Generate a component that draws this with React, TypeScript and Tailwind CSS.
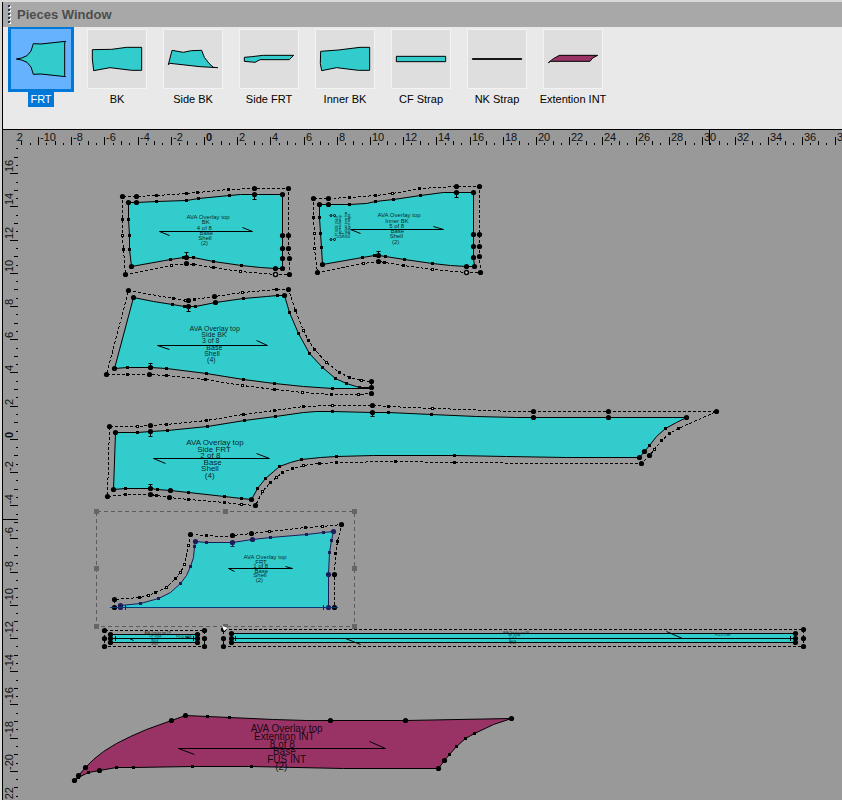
import React, { useState } from 'react';

type TextLine = [text: string, x: number, y: number];

interface Piece {
  name: string;
  origin: [number, number];
  fill: string;
  ink?: string;
  seam: string;
  cut?: string;
  grain?: string;
  notches?: [number, number, number][];
  fontSize: number;
  lines: TextLine[];
}

const TEAL = '#33cccc';
const PLUM = '#993366';

// Piece geometry is stored in thirds of a pixel, relative to the piece origin.
// Points are "x,y,mark" where mark is B (corner), O (open corner), s (curve), o (open curve).
const pieces: Piece[] = [
  {
    name: 'BK',
    origin: [100, 175],
    fill: TEAL,
    seam: '86,82,B 109,82,B 169,79,s 260,76,s 295,71,s 388,61,s 420,58 463,58,B 547,58,B 547,181,B 547,220,B 547,250,B 547,280,B 526,280,B 480,278 424,272,s 340,259,s 280,247,s 260,247,B 250,247,s 211,254,s 95,274,B 88,223,s 88,181,s 85,133,s',
    cut: '67,64,B 109,64,B 169,61,s 260,55,s 292,52,s 385,43,s 463,40,B 565,40,B 565,181,B 565,220,B 568,250,B 568,298,B 526,298,O 421,289,o 340,277,s 280,268,s 260,265,B 214,271,o 76,298,B 70,223,s 67,181,o 67,133,s',
    grain: '207,182 178,169 456,169 427,156',
    notches: [[463, 58, 15], [260, 247, -14]],
    fontSize: 6,
    lines: [['AVA Overlay top', 324, 132], ['BK', 317, 147], ['4 of 8', 313, 165], ['Base', 319, 181], ['Shell', 315, 195], ['(2)', 313, 210]],
  },
  {
    name: 'Inner BK',
    origin: [300, 175],
    fill: TEAL,
    seam: '58,88,B 85,88,B 148,88,s 200,84 226,79,s 280,73,s 361,61,s 430,53 469,52,B 520,52,B 520,178,B 520,214,B 520,247,B 523,274,B 499,274,B 450,272 397,265,s 313,253,s 256,244,s 235,241,B 223,241,s 187,247,s 68,268,B 64,217,s 61,175,s 58,127,s',
    cut: '40,70,B 85,70,B 148,67,s 226,61,s 277,55,o 358,40,s 469,34,B 538,34,B 538,178,B 538,214,B 538,244,B 541,292,B 499,292,O 397,283,o 310,271,s 253,262,s 235,259,B 190,265,o 52,292,B 43,220,o 43,175,o 40,127,s',
    grain: '180,176 152,163 429,163 400,154',
    notches: [[469, 52, 15], [235, 241, -11]],
    fontSize: 6,
    lines: [['AVA Overlay top', 297, 126], ['Inner BK', 291, 144], ['5 of 8', 290, 160], ['Base', 292, 175], ['Shell', 289, 190], ['(2)', 287, 206]],
  },
  {
    name: 'Side BK',
    origin: [90, 280],
    fill: TEAL,
    seam: '130,52,B 190,63 248,73,s 284,79,s 295,79,B 317,79,s 376,68,B 460,55,s 530,48 562,46,s 583,46,B 598,97,s 625,160,s 658,220,s 697,262,s 736,295,s 769,310,s 808,321,s 844,322,B 844,325 727,325,s 640,319 553,310,s 460,298,s 349,280,s 229,265,s 181,262,B 112,262,s 73,265,B',
    cut: '115,31,B 250,55,s 287,61,o 295,61,B 313,58,s 373,49,B 457,37,o 559,28,s 595,28,B 616,91,s 640,151,o 655,181,s 673,208,s 709,247,o 748,277,s 778,292,s 814,301,o 844,304,B 844,340,B 805,343,o 724,343,s 637,337,o 553,328,s 457,316,o 346,298,s 229,286,s 179,283,B 112,283,s 49,283,B',
    grain: '237,209 202,196 533,196 499,181',
    notches: [[295, 79, 16], [181, 262, -12]],
    fontSize: 7,
    lines: [['AVA Overlay top', 374, 153], ['Side BK', 372, 170], ['3 of 8', 362, 189], ['Base', 373, 210], ['Shell', 366, 227], ['(4)', 364, 245]],
  },
  {
    name: 'Side FRT',
    origin: [90, 395],
    fill: TEAL,
    seam: '76,112,B 142,112,s 181,110,B 232,106,s 352,94,s 463,76,s 556,64,s 640,53 680,50 728,49,s 847,52,B 895,52,s 1024,58,s 1160,65 1280,67 1330,67,B 1555,67,B 1789,67,B 1758,81 1726,100,s 1700,125 1678,151,s 1663,169,B 1648,187,B 1430,187 1250,184 1093,181,s 850,181 739,184,s 690,186 634,193,s 600,202 568,214,s 526,250,s 502,280,s 484,313,B 455,310,s 403,304,s 295,292,s 241,286,B 202,283,s 181,280,B 106,280,s 70,283,B',
    cut: '58,94,B 142,94,o 181,91,B 229,88,s 349,76,s 460,58,s 553,46,s 640,34,s 727,31,o 847,31,B 895,34,s 1027,40,o 1130,43 1260,49 1330,49,B 1555,49,B 1879,49,B 1765,100,s 1738,115,s 1714,136,s 1693,163,o 1678,181,B 1654,205,B 1380,205 1093,202,s 917,199,s 739,202,s 688,205,s 640,211,o 607,220,s 577,232,s 559,247,o 541,262,s 517,289,o 496,331,B 454,328,o 403,322,s 295,313,s 238,307,B 199,301,s 181,298,B 106,298,s 52,304,B',
    grain: '225,206 190,190 537,190 499,175',
    notches: [[181, 110, 14], [847, 52, 13], [181, 280, -12]],
    fontSize: 8,
    lines: [['AVA Overlay top', 375, 150], ['Side FRT', 372, 171], ['2 of 8', 361, 189], ['Base', 368, 209], ['Shell', 360, 227], ['(4)', 359, 248]],
  },
  {
    name: 'FRT',
    origin: [90, 505],
    fill: TEAL,
    ink: '#1c1c5a',
    seam: '316,109,B 349,112,s 427,112,B 487,103,B 541,97,s 649,88,s 700,82,s 730,79,B 724,106,s 718,142,s 715,208,B 715,307,B 91,307,B 91,301,B 151,295,s 205,280,s 240,262 271,235,s 290,212 301,184,s 309,156 313,124,s',
    cut: '301,88,B 349,91,s 400,94 427,91,B 484,85,B 538,79,o 646,67,s 697,64,o 754,58,B 742,109,s 736,145,s 733,208,B 733,307,B 73,307,B 73,283,B 148,277,s 175,271,o 196,262,s 229,247,o 256,220,s 271,202,o 283,178,o 295,121,o',
    grain: '434,200 415,190 606,190 586,184',
    notches: [[427, 112, 12]],
    fontSize: 6,
    lines: [['AVA Overlay top', 525, 162], ['FRT', 513, 176], ['1 of 8', 512, 190], ['Base', 514, 204], ['Shell', 510, 216], ['(2)', 508, 230]],
  },
  {
    name: 'CF Strap',
    origin: [90, 505],
    fill: TEAL,
    seam: '61,388,B 322,388,B 322,400,B 322,412,B 61,412,B 61,400,B',
    cut: '43,376,B 343,376,B 343,400,B 343,424,B 43,424,B 43,400,B',
    grain: '131,407 117,400 300,400 286,394',
    fontSize: 3,
    lines: [['AVA Overlay top CF', 203, 387], ['CF Strap', 196, 396], ['6 of 8', 195, 404], ['Base', 195, 412], ['Shell', 194, 420], ['FOLD LINE', 282, 398]],
  },
  {
    name: 'NK Strap',
    origin: [90, 505],
    fill: TEAL,
    seam: '424,385,B 2116,385,B 2116,400,B 2116,412,B 424,412,B 424,400,B',
    cut: '400,373,B 2140,373,B 2140,400,B 2140,424,B 400,424,B 400,400,B',
    grain: '812,418 766,400 1776,400 1728,379',
    fontSize: 3,
    lines: [['AVA Overlay top NK', 1279, 387], ['NK Strap', 1273, 394], ['7 of 8', 1268, 402], ['Base', 1268, 410], ['Shell', 1268, 418], ['FOLD LINE', 1898, 393]],
  },
  {
    name: 'Extention INT',
    origin: [60, 700],
    fill: PLUM,
    seam: '376,46,B 442,49,s 508,52,s 640,57 740,61 811,61,B 1036,61,B 1354,55,B 1300,74 1243,100,s 1216,115,s 1189,139,s 1168,163,s 1153,181,B 1135,205,B 850,205 574,199,s 397,199,s 220,202,s 169,202,s 118,211,B 85,217,s 55,232,s 43,241,B 55,227,B 76,202,B 100,177 130,154 170,130 210,110 260,89 334,61,B',
    grain: '404,164 355,146 977,146 928,124',
    fontSize: 10,
    lines: [['AVA Overlay top', 680, 96], ['Extention INT', 673, 120], ['8 of 8', 667, 144], ['Base', 673, 165], ['FUS INT', 680, 189], ['(2)', 664, 210]],
  },
];

const thumbs = [
  { name: 'FRT', fill: TEAL, points: '16,90 32,87 48,80 60,66 67,44 90,45 164,37 161,42 161,140 164,143 90,135 67,136 60,114 48,100 32,93' },
  { name: 'BK', fill: TEAL, points: '16,62 74,61 119,55 164,55 164,124 134,124 69,116 20,125 16,90' },
  { name: 'Side BK', fill: TEAL, points: '27,64 61,70 85,65 116,64 124,85 138,103 151,115 164,116 111,113 21,103 16,107' },
  { name: 'Side FRT', fill: TEAL, points: '16,85 38,83 73,79 164,79 151,92 63,92 48,100 16,97' },
  { name: 'Inner BK', fill: TEAL, points: '17,67 70,63 135,55 164,55 164,124 130,124 65,116 20,125 16,104' },
  { name: 'CF Strap', fill: TEAL, points: '16,82 164,82 164,98 16,98' },
  { name: 'NK Strap', fill: '#000000', points: '16,89 164,89 164,91 16,91' },
  { name: 'Extention INT', fill: PLUM, points: '16,101 31,89 49,79 164,79 149,87 141,97 23,97' },
];

const snap = (v: number) => Math.floor(v) + 0.5;

const parse = (src: string, [ox, oy]: [number, number]) =>
  src.split(' ').map((item) => {
    const [x, y, mark] = item.split(',');
    return { x: snap(ox + Number(x) / 3), y: snap(oy + Number(y) / 3), mark };
  });

const toPoints = (pts: { x: number; y: number }[]) => pts.map((p) => `${p.x},${p.y}`).join(' ');

const Mark: React.FC<{ x: number; y: number; mark?: string; ink: string }> = ({ x, y, mark, ink }) => {
  if (mark === 'B') return <circle cx={x} cy={y} r={2.6} fill={ink} />;
  if (mark === 'O') return <circle cx={x} cy={y} r={2} fill="#ccc" stroke={ink} strokeWidth={1.5} />;
  if (mark === 's') return <rect x={x - 1.5} y={y - 1.5} width={3} height={3} fill={ink} />;
  if (mark === 'o') return <rect x={x - 1} y={y - 1} width={2} height={2} fill="#ccc" stroke={ink} />;
  return null;
};

const PieceShape: React.FC<{ piece: Piece }> = ({ piece }) => {
  const { origin, ink = '#000000' } = piece;
  const seam = parse(piece.seam, origin);
  const cut = piece.cut ? parse(piece.cut, origin) : [];

  return (
    <g>
      <polygon points={toPoints(seam)} fill={piece.fill} stroke={ink} />
      <polygon points={toPoints(cut)} fill="none" stroke="#000" strokeDasharray="3 2" shapeRendering="crispEdges" />
      {piece.lines.map(([text, x, y]) => (
        <text
          key={text}
          x={origin[0] + x / 3}
          y={origin[1] + y / 3}
          fontSize={piece.fontSize}
          textAnchor="middle"
          fill="#000"
          fillOpacity={0.85}
        >
          {text}
        </text>
      ))}
      {piece.grain && <polyline points={toPoints(parse(piece.grain, origin))} fill="none" stroke="#000" />}
      {piece.notches?.map(([x, y, dy]) => {
        const nx = snap(origin[0] + x / 3);
        const ny = snap(origin[1] + y / 3);
        const end = snap(origin[1] + (y + dy) / 3);
        return <path key={`${x}-${y}`} d={`M${nx} ${ny}V${end}M${nx - 2} ${end}h4`} stroke={ink} />;
      })}
      {cut.map((p, i) => <Mark key={i} {...p} ink="#000" />)}
      {seam.map((p, i) => <Mark key={i} {...p} ink={ink} />)}
    </g>
  );
};

const SCALE = 16.6;
const range = (from: number, to: number) => Array.from({ length: (to - from) * 2 + 1 }, (_, i) => from + i / 2);

const tickSize = (u: number) => {
  if (u % 2 === 0) return 8;
  return Number.isInteger(u) ? 4 : 2;
};

const TopRuler: React.FC = () => (
  <svg className="ml-[13px] block h-[17px] w-full shrink-0" aria-hidden="true">
    <g transform="translate(-16 -130)" fontSize={11}>
      {range(-12, 40).map((u) => {
        const x = snap(204.4 + u * SCALE);
        const size = tickSize(u);
        return (
          <g key={u}>
            {u > -12 && <path d={`M${x} 145V${145 - size}`} stroke="#000" />}
            {size === 8 && <text x={x + 1.5} y={141} fill="#111" fontWeight={u === 0 ? 700 : 400}>{u}</text>}
          </g>
        );
      })}
      <path d="M709.5 130V145" stroke="#000" />
    </g>
  </svg>
);

const SideRuler: React.FC = () => (
  <svg className="block h-full w-[16px] shrink-0" aria-hidden="true">
    <g transform="translate(-3 -147)" fontSize={11}>
      {range(-24, 17.5).map((u) => {
        const y = snap(439.3 - u * SCALE);
        const size = tickSize(u);
        return (
          <g key={u}>
            <path d={`M18 ${y}H${18 - size}`} stroke="#000" />
            {size === 8 && (
              <text transform={`translate(13 ${y - 1.5}) rotate(-90)`} fill="#111" fontWeight={u === 0 ? 700 : 400}>
                {u}
              </text>
            )}
          </g>
        );
      })}
      <path d="M3 519.5H18" stroke="#000" />
    </g>
  </svg>
);

const InnerNotes: React.FC = () => (
  <g>
    {['LFT SIDE ONLY', 'Compress facing', 'Soft', 'Construct inner trim', 'Underlay of edges'].map((note, i) => (
      <text key={note} transform={`translate(${338 + i * 3} 238) rotate(-90)`} fontSize={3} fill="#000">
        {note}
      </text>
    ))}
    {[[331, 215], [334, 215], [331, 239], [334, 239]].map(([x, y]) => (
      <circle key={`${x}-${y}`} cx={x + 0.5 * (x - 331) / 3} cy={y + 0.5} r={1} fill={TEAL} stroke="#000" />
    ))}
  </g>
);

const Selection: React.FC = () => (
  <g>
    <rect x={96.5} y={511.5} width={258} height={115} fill="none" stroke="#5c5c5c" strokeDasharray="4 3" shapeRendering="crispEdges" />
    {[[96, 511], [225, 511], [354, 511], [96, 568], [354, 568], [96, 626], [225, 626], [354, 626]].map(([x, y]) => (
      <rect key={`${x}-${y}`} x={x - 2} y={y - 2} width={5} height={5} fill="#666" />
    ))}
    <path d="M222 626l6 2l-4 3z" fill="#fff" />
  </g>
);

const Workspace: React.FC = () => (
  <svg className="block h-full w-full" role="img" aria-label="Pattern pieces">
    <g transform="translate(-19 -147)">
      {pieces.map((piece) => <PieceShape key={piece.name} piece={piece} />)}
      <InnerNotes />
      <path d="M110 607.5H338" stroke="#0b3a78" />
      <path d="M125.5 605V610M323.5 605V610" stroke="#1c1c5a" />
      <path d="M110 638.5H198M231 638.5H796" stroke="#000" />
      <path d="M115.5 636V641M193.5 636V641M235.5 636V641M790.5 636V641" stroke="#000" />
      <Selection />
    </g>
  </svg>
);

const App: React.FC = () => {
  const [selected, setSelected] = useState('FRT');

  return (
    <div className="flex h-screen flex-col overflow-hidden bg-[#d9d9d9] pt-[2px] pl-[2px] font-['Liberation_Sans',Arial,sans-serif]">
      <div className="flex min-h-0 flex-1 flex-col border-l border-black">
        <header className="flex h-[25px] shrink-0 items-center bg-[#a8a8a8] pl-[5px]">
          <svg className="h-[19px] w-[3px]" aria-hidden="true">
            <path d="M2 1V19" stroke="#fff" strokeWidth="2" strokeDasharray="2 2" />
            <path d="M1 0V19" stroke="#1f3864" strokeWidth="2" strokeDasharray="2 2" />
          </svg>
          <h1 className="ml-[6px] text-[13px] font-bold text-[#4d4d4d]">Pieces Window</h1>
        </header>

        <div className="flex h-[103px] shrink-0 items-start overflow-hidden border-b border-black bg-[#e9e9e9]">
          {thumbs.map((thumb) => {
            const active = thumb.name === selected;
            return (
              <button
                key={thumb.name}
                type="button"
                aria-pressed={active}
                onClick={() => setSelected(thumb.name)}
                className="flex w-[76px] shrink-0 flex-col items-center"
              >
                <span className={`border-x-3 border-t-2 border-b-3 ${active ? 'border-[#0078d7]' : 'border-transparent'}`}>
                  <span
                    className={`block size-[60px] border ${active ? 'border-[#66b2ff] bg-[#66b2ff]' : 'border-[#f3f3f3] bg-[#dedede]'}`}
                  >
                    <svg className="size-full" viewBox="3 3 174 174" aria-hidden="true">
                      <polygon points={thumb.points} fill={thumb.fill} stroke="#000" strokeWidth="3" />
                    </svg>
                  </span>
                </span>
                <span
                  className={`px-[2px] text-[11px] leading-[15px] whitespace-nowrap ${active ? 'bg-[#0078d7] text-white' : 'text-black'}`}
                >
                  {thumb.name}
                </span>
              </button>
            );
          })}
        </div>

        <main className="flex min-h-0 flex-1 flex-col overflow-hidden bg-[#999999]">
          <TopRuler />
          <div className="flex min-h-0 flex-1">
            <SideRuler />
            <div className="min-w-0 flex-1">
              <Workspace />
            </div>
          </div>
        </main>
      </div>
    </div>
  );
};

export default App;
